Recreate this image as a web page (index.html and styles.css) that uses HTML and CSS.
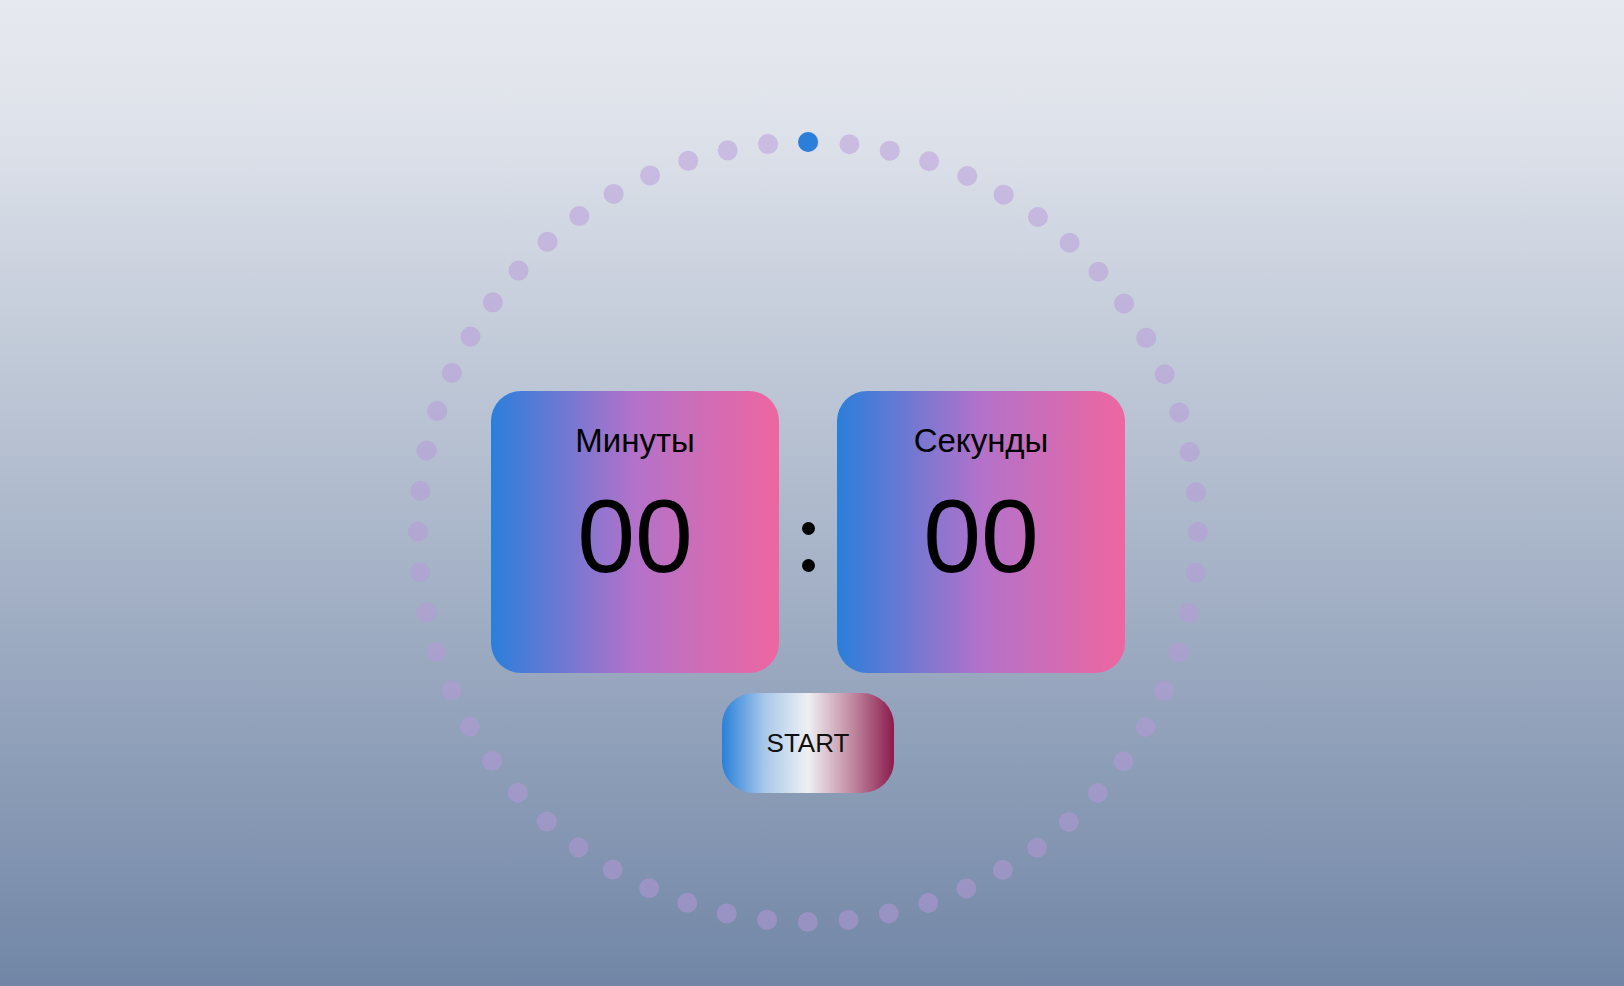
FILE: index.html
```html
<!DOCTYPE html>
<html lang="ru">
<head>
<meta charset="utf-8">
<title>Таймер</title>
<link rel="stylesheet" href="styles.css">
</head>
<body>
<main class="page">
  <section class="timer">
    <svg class="ring" width="800" height="800" viewBox="0 0 800 800" aria-hidden="true">
      <circle class="ring-dots" cx="400" cy="400" r="390"></circle>
      <circle class="ring-active" cx="400" cy="10" r="10"></circle>
    </svg>
    <div class="clock">
      <div class="card">
        <div class="card-label">Минуты</div>
        <div class="card-value">00</div>
      </div>
      <div class="colon"><span class="colon-dot"></span><span class="colon-dot"></span></div>
      <div class="card">
        <div class="card-label">Секунды</div>
        <div class="card-value">00</div>
      </div>
    </div>
    <button class="start">START</button>
  </section>
</main>
</body>
</html>
```
FILE: styles.css
```css
html, body {
  margin: 0;
  height: 100%;
}
body {
  background: linear-gradient(to bottom, #e6e9ef 0%, #dfe3eb 12%, #7186a6 100%);
  font-family: "Liberation Sans", Arial, sans-serif;
  overflow: hidden;
}
.page {
  display: flex;
  justify-content: center;
  padding-right: 8px;
  padding-top: 132px;
}
.timer {
  position: relative;
  width: 800px;
  height: 800px;
  display: flex;
  flex-direction: column;
  align-items: center;
  padding-top: 259px;
  box-sizing: border-box;
}
.ring {
  position: absolute;
  left: 0;
  top: 0;
}
.ring-dots {
  fill: none;
  stroke: rgba(184, 152, 218, 0.5);
  stroke-width: 20;
  stroke-linecap: round;
  stroke-dasharray: 0 40.8407;
}
.ring-active {
  fill: #2b7fd9;
}
.clock {
  position: relative;
  display: flex;
  align-items: center;
  gap: 22px;
}
.card {
  width: 288px;
  height: 282px;
  border-radius: 30px;
  background: linear-gradient(to right, #2a7fdb 0%, #b372ca 50%, #ee66a0 100%);
  display: flex;
  flex-direction: column;
  align-items: center;
  padding-top: 32px;
  box-sizing: border-box;
  color: #000;
}
.card-label {
  font-size: 33px;
  line-height: 36px;
}
.card-value {
  margin-top: 25px;
  font-size: 104px;
  line-height: 104px;
}
.colon {
  width: 14px;
  display: flex;
  flex-direction: column;
  align-items: center;
  gap: 24px;
  margin-top: 30px;
}
.colon-dot {
  width: 13px;
  height: 13px;
  border-radius: 50%;
  background: #000;
}
.start {
  position: relative;
  margin-top: 20px;
  width: 172px;
  height: 100px;
  border: none;
  border-radius: 32px;
  background: linear-gradient(to right, #2980d9 0%, #a9c9ea 25%, #eef0f2 50%, #c28ca3 75%, #8b1b4c 100%);
  font-family: "Liberation Sans", Arial, sans-serif;
  font-size: 26px;
  color: #111;
  cursor: pointer;
  padding: 0;
}
```
